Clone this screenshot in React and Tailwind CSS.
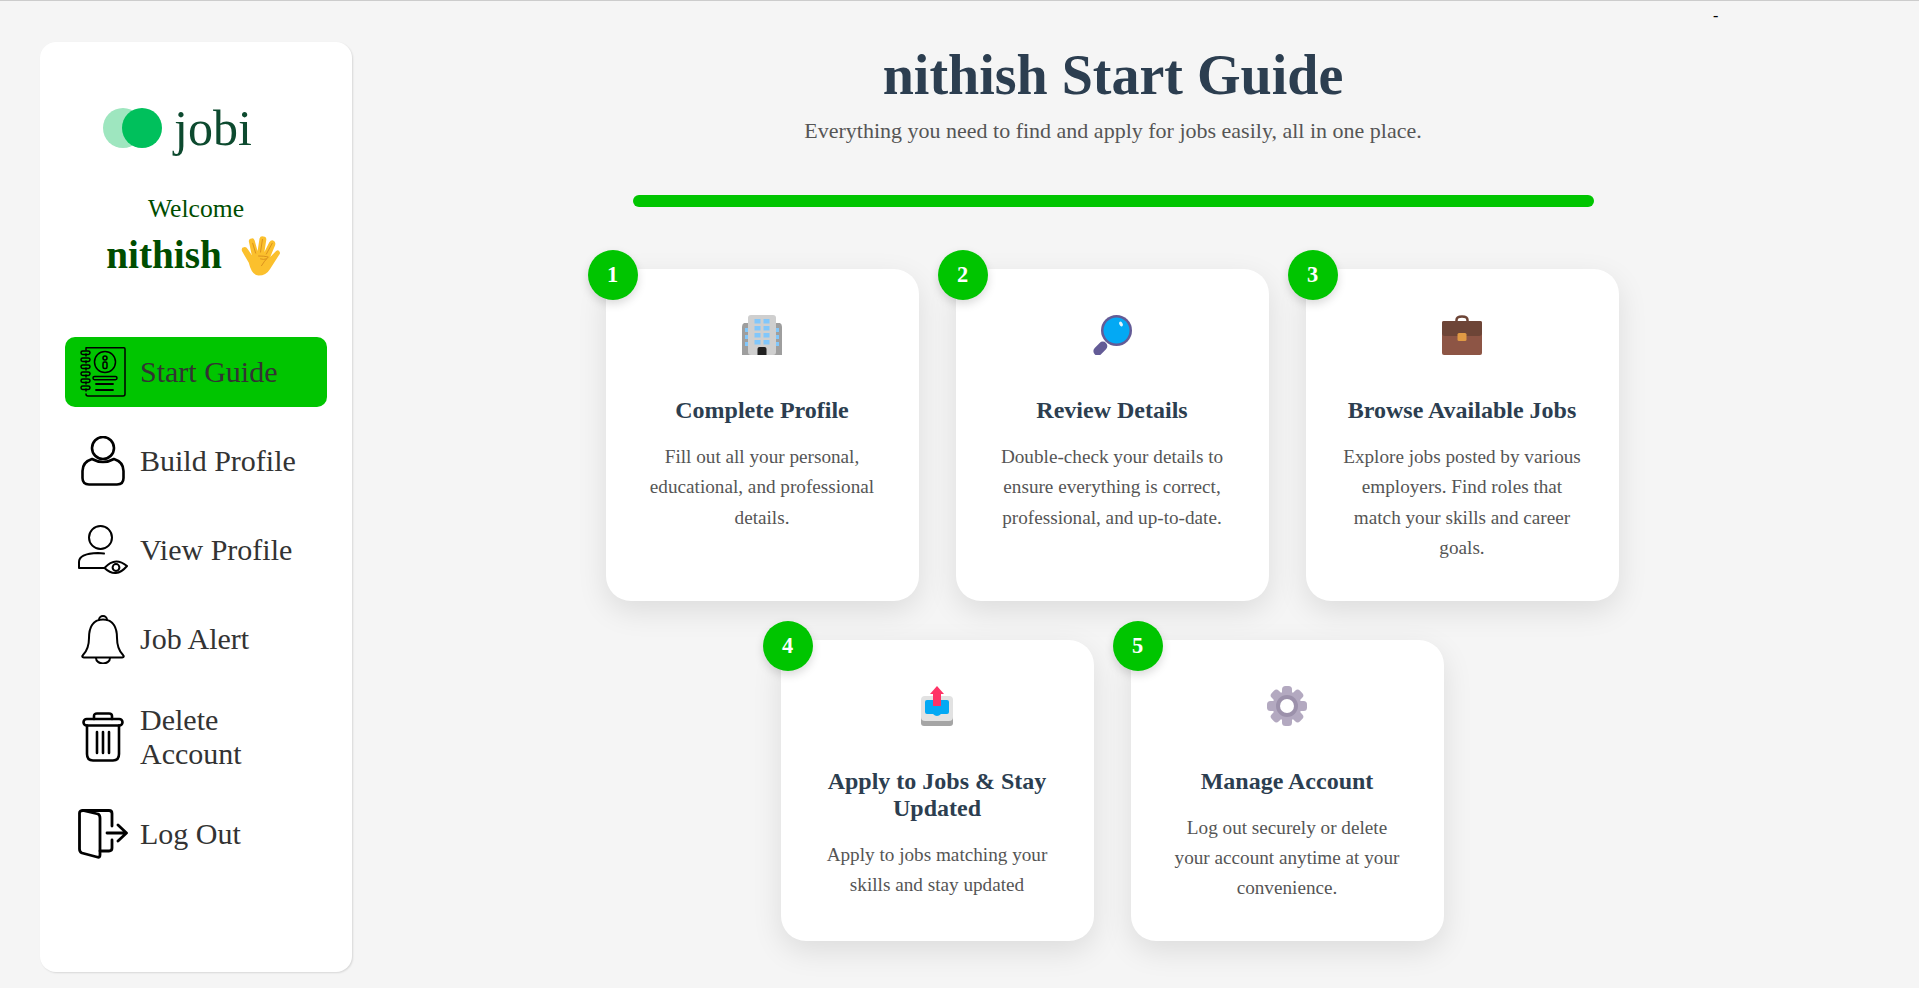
import React from "react";

const iconClass = "w-[50px] h-[50px]";

function GuideIcon() {
  return (
    <svg viewBox="0 0 50 50" className={iconClass} fill="none" stroke="#000" strokeWidth="1.5" strokeLinecap="round" strokeLinejoin="round">
      <path d="M8 3 V0.8 H46 Q47 0.800 47 2 V47 Q47 49 45 49 H10 Q8 49 8 47" />
      <path d="M8 7 V9 M8 14 V16 M8 21 V23 M8 28 V30 M8 35 V37 M8 42 V44" />
      <rect x="3" y="4" width="9" height="3.400" rx="1.700" />
      <rect x="3" y="11" width="9" height="3.400" rx="1.700" />
      <rect x="3" y="18" width="9" height="3.400" rx="1.700" />
      <rect x="3" y="25" width="9" height="3.400" rx="1.700" />
      <rect x="3" y="32" width="9" height="3.400" rx="1.700" />
      <rect x="3" y="39" width="9" height="3.400" rx="1.700" />
      <circle cx="27" cy="15" r="10.500" />
      <circle cx="27" cy="11" r="2" />
      <rect x="25" y="15" width="4" height="6.500" rx="1.500" />
      <rect x="15" y="29.500" width="24" height="3.200" rx="1.600" />
      <path d="M18 37 H35 M18 43 H35" strokeWidth="1.800" />
    </svg>
  );
}

function UserIcon() {
  return (
    <svg viewBox="0 0 50 50" className={iconClass} fill="none" stroke="#000" strokeWidth="2.600" strokeLinecap="round" strokeLinejoin="round">
      <circle cx="25" cy="12" r="11" />
      <path d="M14 23 Q25 29 36 23 Q45.500 26 45.500 35 V42 Q45.500 48.500 39 48.500 H11 Q4.500 48.500 4.500 42 V35 Q4.500 26 14 23 Z" />
    </svg>
  );
}

function ViewUserIcon() {
  return (
    <svg viewBox="0 0 50 50" className={iconClass} fill="none" stroke="#000" strokeWidth="2" strokeLinecap="round" strokeLinejoin="round">
      <circle cx="22.500" cy="12.500" r="11.500" />
      <path d="M26 28.500 Q23 28 20 28 Q1 28.500 1 37 V43 H26" />
      <path d="M26.500 43 Q37 31 49 41 Q38 54 26.500 43 Z" />
      <circle cx="38" cy="42.500" r="3.400" />
    </svg>
  );
}

function BellIcon() {
  return (
    <svg viewBox="0 0 50 50" className={iconClass} fill="none" stroke="#000" strokeWidth="2" strokeLinecap="round" strokeLinejoin="round">
      <path d="M21 6 A4 4 0 1 1 29 6" />
      <path d="M25 5.500 C14 5.500 11 15 11 24 C11 33 9 37 5 41 Q3 43 6 43.500 H44 Q47 43 45 41 C41 37 39 33 39 24 C39 15 36 5.500 25 5.500 Z" />
      <path d="M18 44 A7 5.500 0 0 0 32 44" />
    </svg>
  );
}

function TrashIcon() {
  return (
    <svg viewBox="0 0 50 50" className={iconClass} fill="none" stroke="#000" strokeWidth="2.600" strokeLinecap="round" strokeLinejoin="round">
      <rect x="5.500" y="7" width="39" height="6.500" rx="3.250" />
      <path d="M16 7 V4 Q16 1.500 19 1.500 H31 Q34 1.500 34 4 V7" />
      <path d="M9 13.500 V42 Q9 48.500 15 48.500 H35 Q41 48.500 41 42 V13.500" />
      <path d="M19 20 V41 M25 20 V41 M31 20 V41" />
    </svg>
  );
}

function LogoutIcon() {
  return (
    <svg viewBox="0 0 50 50" className={iconClass} fill="none" stroke="#000" strokeWidth="2.800" strokeLinecap="round" strokeLinejoin="round">
      <path d="M1.500 4 Q1.500 1.500 5 1.500 L20 5 Q22 6 22 9 V46 Q22 49 19 48 L4 44 Q1.500 43 1.500 40 Z" />
      <path d="M5 1.500 H31 Q34 1.500 34 4.500 V17" />
      <path d="M34 31 V39 Q34 42 31 42 H22" />
      <path d="M29 24 H48 M40 16 L48.500 24 L40 32" />
    </svg>
  );
}

function HandEmoji() {
  return (
    <svg viewBox="0 0 40 41" className="w-[39px] h-[41px] inline-block">
      <path fill="#fbc02d" d="M8 28 L1 16 Q0 12 3 12 Q5 11 7 14 L11 20 L8 6 Q8 3 11 3 Q13 2.500 14 5 L17 16 L19 3 Q20 0 23 1 Q26 1 26 4 L24 17 L29 7 Q31 4 33 5 Q36 6 35 10 L30 22 L36 16 Q38 14 39 16 Q41 18 39 20 L30 34 Q26 41 18 41 Q11 41 8 28 Z" />
      <path fill="none" stroke="#d68a1c" strokeWidth="0.900" strokeLinecap="round" d="M12 8 L15 18 M22 4 L20 17 M32 8 L26 19 M18 21 Q24 21 28 22 Q24 26 21 31 M26 24 Q23 25 20 24" />
    </svg>
  );
}

function BuildingEmoji() {
  return (
    <svg viewBox="0 0 40 40" className="w-[40px] h-[40px]">
      <path fill="#9e9e9e" d="M2 8 Q0 9 0 12 V40 H40 V12 Q40 9 38 8 Z" />
      <rect x="6" y="0" width="28" height="40" rx="3" fill="#cfcfcf" />
      <g fill="#81c7fb">
        <rect x="12.500" y="4" width="6" height="4.500" />
        <rect x="21.500" y="4" width="6" height="4.500" />
        <rect x="12.500" y="11" width="6" height="4.500" />
        <rect x="21.500" y="11" width="6" height="4.500" />
        <rect x="12.500" y="18" width="6" height="4.500" />
        <rect x="21.500" y="18" width="6" height="4.500" />
        <rect x="12.500" y="25" width="6" height="4.500" />
        <rect x="21.500" y="25" width="6" height="4.500" />
        <rect x="3" y="13" width="3" height="4" />
        <rect x="3" y="20" width="3" height="4" />
        <rect x="3" y="27" width="3" height="4" />
        <rect x="34" y="13" width="3" height="4" />
        <rect x="34" y="20" width="3" height="4" />
        <rect x="34" y="27" width="3" height="4" />
      </g>
      <path fill="#212121" d="M15.500 40 V34 Q15.500 32 17.500 32 H22.500 Q24.500 32 24.500 34 V40 Z" />
    </svg>
  );
}

function MagnifierEmoji() {
  return (
    <svg viewBox="0 0 40 40" className="w-[40px] h-[40px]">
      <rect x="-1" y="-5" width="9" height="16" rx="4.500" transform="translate(8 29) rotate(45)" fill="#635b96" />
      <circle cx="24.500" cy="15.500" r="15.500" fill="#635b96" />
      <circle cx="24.500" cy="15.500" r="13" fill="#03a9f4" />
      <ellipse cx="29" cy="9" rx="1.700" ry="2.500" fill="#e1f5fe" transform="rotate(-30 29 9)" />
    </svg>
  );
}

function BriefcaseEmoji() {
  return (
    <svg viewBox="0 0 40 40" className="w-[40px] h-[40px]">
      <path fill="none" stroke="#6d4537" strokeWidth="2.500" d="M14.500 7 V5 Q14.500 1.500 20 1.500 Q25.500 1.500 25.500 5 V7" />
      <rect x="0" y="6" width="40" height="34" rx="2" fill="#8d5545" />
      <path fill="#6d4537" d="M2 6 H38 Q40 6 40 8 V18 Q40 21 37 21 H3 Q0 21 0 18 V8 Q0 6 2 6 Z" />
      <rect x="15.500" y="18" width="9" height="8" rx="1.500" fill="#e09a44" />
    </svg>
  );
}

function OutboxEmoji() {
  return (
    <svg viewBox="0 0 40 40" className="w-[40px] h-[40px]">
      <path fill="#a5a5a5" d="M4 26 H36 V37 Q36 40 33 40 H7 Q4 40 4 37 Z" />
      <rect x="4" y="10" width="32" height="25" rx="4" fill="#e2e2e2" />
      <path fill="#03a9f4" d="M10 14 H30 Q32 14 32 16 V26 Q32 28 30 28 H24 Q20 32 16 28 H10 Q8 28 8 26 V16 Q8 14 10 14 Z" />
      <path fill="#ff3366" d="M20 0 L27 8 H24 V20 H16 V8 H13 Z" />
    </svg>
  );
}

function GearEmoji() {
  const teeth = [0, 45, 90, 135, 180, 225, 270, 315];
  return (
    <svg viewBox="0 0 40 40" className="w-[40px] h-[40px]">
      {teeth.map((a) => (
        <rect key={a} x="15" y="0" width="10" height="12" rx="3.500" fill="#b3a9c0" transform={`rotate(${a} 20 20)`} />
      ))}
      <circle cx="20" cy="20" r="14.500" fill="#b3a9c0" />
      <circle cx="20" cy="20" r="11" fill="#9c91ab" />
      <circle cx="20" cy="20" r="7" fill="#fff" />
    </svg>
  );
}

const navItems = [
  { label: "Start Guide", icon: <GuideIcon />, active: true },
  { label: "Build Profile", icon: <UserIcon /> },
  { label: "View Profile", icon: <ViewUserIcon /> },
  { label: "Job Alert", icon: <BellIcon /> },
  { label: "Delete Account", icon: <TrashIcon />, tall: true },
  { label: "Log Out", icon: <LogoutIcon /> },
];

const steps = [
  {
    n: 1,
    icon: <BuildingEmoji />,
    title: "Complete Profile",
    text: "Fill out all your personal, educational, and professional details.",
  },
  {
    n: 2,
    icon: <MagnifierEmoji />,
    title: "Review Details",
    text: "Double-check your details to ensure everything is correct, professional, and up-to-date.",
  },
  {
    n: 3,
    icon: <BriefcaseEmoji />,
    title: "Browse Available Jobs",
    text: "Explore jobs posted by various employers. Find roles that match your skills and career goals.",
  },
  {
    n: 4,
    icon: <OutboxEmoji />,
    title: "Apply to Jobs & Stay Updated",
    text: "Apply to jobs matching your skills and stay updated",
  },
  {
    n: 5,
    icon: <GearEmoji />,
    title: "Manage Account",
    text: "Log out securely or delete your account anytime at your convenience.",
  },
];

function StepCard({ step }) {
  return (
    <div className="relative w-[313px] rounded-[25px] bg-white px-[37px] pt-[46px] pb-[37px] text-center shadow-[0_10px_30px_rgba(0,0,0,0.1)]">
      <div className="absolute -left-[18px] -top-[19px] flex h-[50px] w-[50px] items-center justify-center rounded-full bg-[#00c500] text-[22.4px] font-bold text-white shadow-[0_4px_10px_rgba(0,0,0,0.15)]">
        {step.n}
      </div>
      <div className="flex justify-center">{step.icon}</div>
      <h3 className="mt-[42px] mb-[18px] text-[24px] leading-[27px] font-bold text-[#2c3e50]">{step.title}</h3>
      <p className="text-[19.2px] leading-[30.4px] text-[#555555]">{step.text}</p>
    </div>
  );
}

export default function App() {
  return (
    <div className="relative flex h-[988px] overflow-hidden border-t border-[#cccccc] bg-[#f5f5f5] font-['Liberation_Serif',serif]">
      <aside className="ml-[40px] mt-[41px] flex h-[930px] w-[312px] shrink-0 flex-col rounded-[16px] bg-white px-[25px] shadow-[1px_1px_2px_rgba(0,0,0,0.12)]">
        <div className="mt-[61px] flex items-center pl-[38px]">
          <div className="relative h-[40px] w-[59px]">
            <div className="h-[40px] w-[40px] rounded-full bg-[#9ee6bf]"></div>
            <div className="absolute left-[19px] top-0 h-[40px] w-[40px] rounded-full bg-[#00c05c]"></div>
          </div>
          <span className="ml-[12px] text-[50px] leading-[50px] text-[#0d4a2f]">jobi</span>
        </div>
        <div className="mt-[41px] text-center text-[25.6px] leading-[29px] text-[#004d00]">Welcome</div>
        <div className="mt-[10px] flex items-center justify-center gap-[19px] pr-[6px] text-[39.2px] leading-[44px] font-bold text-[#004d00]">
          <span>nithish</span>
          <HandEmoji />
        </div>
        <nav className="mt-[60px] flex flex-col gap-[19px]">
          {navItems.map((item) => (
            <div
              key={item.label}
              className={`flex items-center gap-[12px] rounded-[10px] pl-[13px] text-[30px] leading-[34px] text-[#333333] ${item.tall ? "h-[87px]" : "h-[70px]"} ${item.active ? "bg-[#00c500]" : ""}`}
            >
              <span className="flex w-[50px] shrink-0 justify-center">{item.icon}</span>
              <span className="w-[165px]">{item.label}</span>
            </div>
          ))}
        </nav>
      </aside>

      <main className="w-[1522px] pt-[42px] text-center">
        <h1 className="text-[56px] leading-[64px] font-bold text-[#2c3e50]">nithish Start Guide</h1>
        <p className="mt-[12px] text-[22px] leading-[24px] text-[#555555]">
          Everything you need to find and apply for jobs easily, all in one place.
        </p>
        <div className="mx-auto mt-[52px] h-[12px] w-[961px] rounded-[6px] bg-[#00c500]"></div>
        <div className="mx-auto mt-[62px] flex w-[1015px] flex-wrap justify-center gap-x-[37px] gap-y-[39px] pr-[2px]">
          {steps.map((step) => (
            <StepCard key={step.n} step={step} />
          ))}
        </div>
      </main>

      <span className="absolute left-[1713px] top-[3px] text-[16px] text-black">-</span>
    </div>
  );
}
